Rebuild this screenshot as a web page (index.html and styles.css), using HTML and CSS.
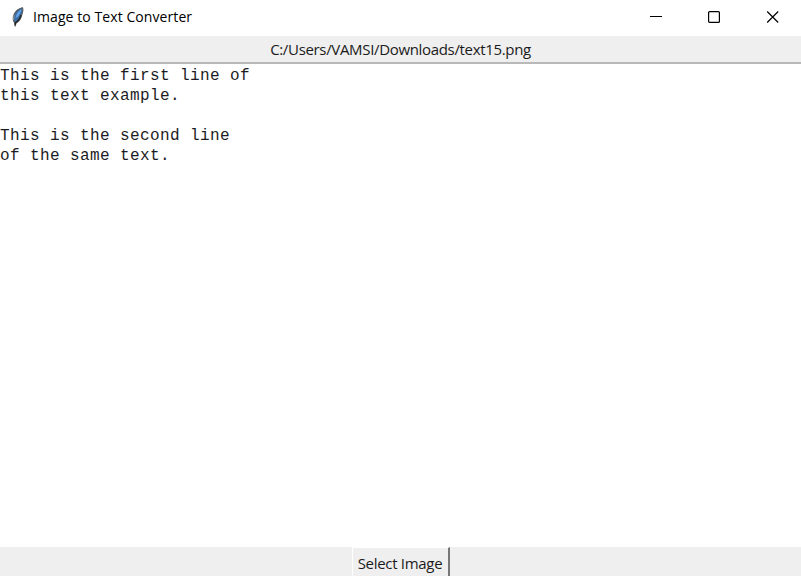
FILE: index.html
```html
<!DOCTYPE html>
<html lang="en">
<head>
<meta charset="utf-8">
<title>Image to Text Converter</title>
<link rel="stylesheet" href="styles.css">
</head>
<body>
<div class="window">
  <header class="titlebar">
    <svg class="feather" width="14" height="22" viewBox="0 0 14 22">
      <path d="M11.300 1.700C8 2.200 4 5.500 2.700 9.500C1.900 12 2 14.500 3.500 16.500L4.200 19.500L5.200 17C8.500 15.500 10 12.500 10.700 9C11.800 6 12.300 3 11.300 1.700Z" fill="#3d70a8" stroke="#555" stroke-width="1.100"/>
      <path d="M10.500 3C8 4.500 5.500 7.500 4.500 12L7 10.500C8.500 8.500 10 5.500 10.500 3Z" fill="#67a6e8"/>
      <path d="M10 9C9 12 7.500 15 4.500 16.500L4 19.500" fill="none" stroke="#222" stroke-width="1.200"/>
      <path d="M3 8.500L2.500 14" stroke="#999" stroke-width="1"/>
    </svg>
    <h1 class="title">Image to Text Converter</h1>
    <div class="controls">
      <svg width="13" height="13" viewBox="0 0 13 13"><path d="M0 6.500h12" stroke="#000"/></svg>
      <svg width="13" height="13" viewBox="0 0 13 13"><rect x=".6" y="1.600" width="10.800" height="10.800" rx="1" fill="none" stroke="#000" stroke-width="1.200"/></svg>
      <svg width="13" height="13" viewBox="0 0 13 13"><path d="M1.200 1.500l11 11M12.200 1.500l-11 11" stroke="#000" stroke-width="1.200"/></svg>
    </div>
  </header>
  <div class="path"><span>C:/Users/VAMSI/Downloads/text15.png</span></div>
  <pre class="output">This is the first line of
this text example.

This is the second line
of the same text.</pre>
  <footer class="footer"><button class="select">Select Image</button></footer>
</div>
</body>
</html>
```
FILE: styles.css
```css
body {
  margin: 0;
  background: #fff;
}

.window {
  display: flex;
  flex-direction: column;
  width: 801px;
  height: 576px;
  overflow: hidden;
  font-family: "Open Sans", "Noto Sans", sans-serif;
  color: #000;
}

.titlebar {
  display: flex;
  flex: none;
  align-items: center;
  box-sizing: border-box;
  height: 36px;
  padding: 0 22px 3px 11px;
}

.feather {
  margin-right: 8px;
}

.title {
  margin: 0;
  font-size: 14px;
  font-weight: 400;
  line-height: 20px;
  letter-spacing: 0.08px;
  white-space: nowrap;
}

.controls {
  display: flex;
  gap: 45px;
  margin-left: auto;
}

.controls svg {
  display: block;
}

.path {
  flex: none;
  box-sizing: border-box;
  height: 28px;
  border-bottom: 2px solid #b9b9b9;
  background: #efefef;
  color: #1b1b1b;
  font-size: 15px;
  line-height: 27px;
  letter-spacing: -0.33px;
  text-align: center;
}

.output {
  flex: 1;
  margin: 0;
  padding-top: 2px;
  color: #1c1c24;
  font-family: "Liberation Mono", monospace;
  font-size: 16px;
  line-height: 20px;
  letter-spacing: 0.4px;
}

.footer {
  display: flex;
  flex: none;
  justify-content: center;
  height: 29px;
  background: #efefef;
}

.select {
  box-sizing: border-box;
  width: 98px;
  height: 34px;
  padding: 0 0 2px;
  border: 1px solid #fff;
  border-right: 2px solid #777;
  background: #efefef;
  color: #1b1b1b;
  font: 15px/30px "Open Sans", "Noto Sans", sans-serif;
  letter-spacing: -0.3px;
  white-space: nowrap;
}
```
